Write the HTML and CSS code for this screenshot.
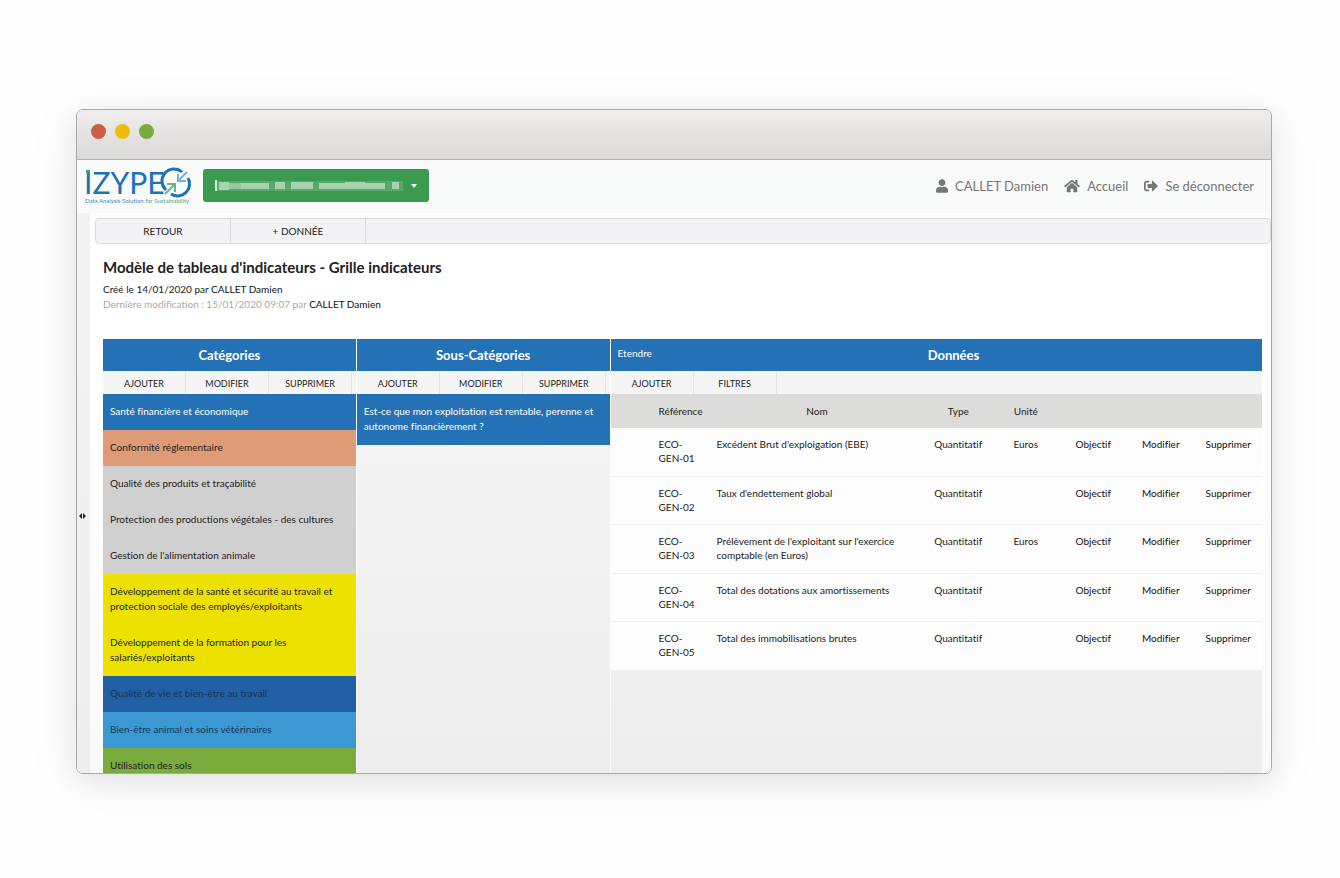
FILE: index.html
```html
<!DOCTYPE html>
<html lang="fr">
<head>
<meta charset="utf-8">
<title>IZYPEO - Grille indicateurs</title>
<link rel="stylesheet" href="styles.css">
</head>
<body>
<div class="stage">
<div class="window">
  <div class="titlebar">
    <span class="dot dot-close"></span>
    <span class="dot dot-min"></span>
    <span class="dot dot-max"></span>
  </div>
  <header class="app-header">
    <a class="logo" href="#" aria-label="IZYPEO">
      <svg width="108" height="38" viewBox="0 0 108 38">
        <text class="logo-word" x="0" y="27">IZYPE</text>
        <rect x="2" y="3" width="4" height="3" fill="#4ea45a"/>
        <g fill="none" stroke-width="3">
          <path d="M82 23A12 12 0 0 1 98 5" stroke="#1b72b8"/>
          <path d="M104 11A12 12 0 0 1 87 27" stroke="#1b72b8"/>
          <path d="M103 5L94 14M94 7V14H102" stroke="#79b2dc" stroke-width="2"/>
          <path d="M81 27L91 17M83 17H91V25" stroke="#6fb38a" stroke-width="2"/>
        </g>
        <text class="logo-tag" x="1" y="36">Data Analysis Solution <tspan class="logo-tag-green">for Sustainability</tspan></text>
      </svg>
    </a>
    <button class="org" aria-label="Exploitation">
      <svg class="org-name" width="192" height="14" viewBox="0 0 192 14">
        <rect x="0" y="1" width="2" height="11" fill="#d5ead9"/>
        <g fill="#d5ead9" opacity=".6">
          <rect x="4" y="3" width="10" height="8"/><rect x="14" y="4" width="12" height="6" opacity=".8"/>
          <rect x="26" y="4" width="28" height="6"/><rect x="60" y="3" width="10" height="7"/>
          <rect x="76" y="3" width="22" height="7"/><rect x="104" y="4" width="26" height="6"/>
          <rect x="130" y="3" width="20" height="7"/><rect x="150" y="4" width="20" height="6"/>
          <rect x="177" y="3" width="7" height="7"/>
        </g>
        <rect x="2" y="2" width="186" height="10" fill="#fff" opacity=".15"/>
      </svg>
      <svg width="6" height="4" viewBox="0 0 6 4"><path d="M0 0H6L3 4Z" fill="#fff"/></svg>
    </button>
    <nav class="nav">
      <a href="#"><svg width="12" height="14" viewBox="0 0 448 512"><path fill="currentColor" d="M224 256c71 0 128-57 128-128S295 0 224 0 96 57 96 128s57 128 128 128zm90 32h-17c-22 10-47 16-73 16s-51-6-73-16h-17C60 288 0 348 0 422v42c0 27 21 48 48 48h352c27 0 48-21 48-48v-42c0-74-60-134-134-134z"/></svg>CALLET Damien</a>
      <a href="#"><svg width="16" height="14" viewBox="0 0 576 512"><path fill="currentColor" d="M281 149L96 301v164c0 8 7 15 16 15h112c9 0 16-7 16-16v-96c0-9 7-16 16-16h64c9 0 16 7 16 16v96c0 9 7 16 16 16h112c9 0 16-7 16-16V300L295 149c-4-4-10-4-14 0zm291 102l-84-69V44c0-7-5-12-12-12h-56c-7 0-12 5-12 12v73l-90-74c-17-14-43-14-60 0L4 251c-5 4-6 12-1 17l25 31c4 5 12 6 17 1L281 107c4-4 10-4 14 0l236 193c5 5 13 4 17-1l25-31c5-5 4-13-1-17z"/></svg>Accueil</a>
      <a href="#"><svg width="14" height="14" viewBox="0 0 512 512"><path fill="currentColor" d="M497 273L329 441c-15 15-41 4-41-17v-96H152c-13 0-24-11-24-24v-96c0-13 11-24 24-24h136V88c0-21 26-32 41-17l168 168c9 9 9 25 0 34zM192 436v-40c0-7-5-12-12-12H96c-18 0-32-14-32-32V160c0-18 14-32 32-32h84c7 0 12-5 12-12V76c0-7-5-12-12-12H96c-53 0-96 43-96 96v192c0 53 43 96 96 96h84c7 0 12-5 12-12z"/></svg>Se déconnecter</a>
    </nav>
  </header>
  <div class="app-body">
    <aside class="rail">
      <button class="rail-handle" aria-label="Menu"><svg width="7" height="6" viewBox="0 0 7 6"><path d="M3 0V6L0 3ZM4 0V6L7 3Z" fill="#222"/></svg></button>
    </aside>
    <main class="main">
      <div class="toolbar">
        <button>RETOUR</button>
        <button>+ DONNÉE</button>
      </div>
      <div class="content">
        <h1>Modèle de tableau d'indicateurs - Grille indicateurs</h1>
        <p class="meta">Créé le 14/01/2020 par <span class="who">CALLET Damien</span></p>
        <p class="meta meta-muted">Dernière modification : 15/01/2020 09:07 par <span class="who">CALLET Damien</span></p>
        <div class="panels">
          <section class="panel">
            <div class="panel-head"><h2>Catégories</h2></div>
            <div class="actions"><button>AJOUTER</button><button>MODIFIER</button><button>SUPPRIMER</button></div>
            <ul class="items">
              <li><button class="item blue">Santé financière et économique</button></li>
              <li><button class="item orange">Conformité réglementaire</button></li>
              <li><button class="item grey">Qualité des produits et traçabilité</button></li>
              <li><button class="item grey">Protection des productions végétales - des cultures</button></li>
              <li><button class="item grey">Gestion de l'alimentation animale</button></li>
              <li><button class="item yellow">Développement de la santé et sécurité au travail et protection sociale des employés/exploitants</button></li>
              <li><button class="item yellow">Développement de la formation pour les salariés/exploitants</button></li>
              <li><button class="item navy">Qualité de vie et bien-être au travail</button></li>
              <li><button class="item sky">Bien-être animal et soins vétérinaires</button></li>
              <li><button class="item green">Utilisation des sols</button></li>
            </ul>
          </section>
          <section class="panel">
            <div class="panel-head"><h2>Sous-Catégories</h2></div>
            <div class="actions"><button>AJOUTER</button><button>MODIFIER</button><button>SUPPRIMER</button></div>
            <ul class="items">
              <li><button class="item blue">Est-ce que mon exploitation est rentable, perenne et autonome financièrement ?</button></li>
            </ul>
          </section>
          <section class="panel">
            <div class="panel-head"><a class="extend" href="#">Etendre</a><h2>Données</h2></div>
            <div class="actions"><button>AJOUTER</button><button>FILTRES</button></div>
            <table class="data">
              <colgroup><col class="c-pad"><col class="c-ref"><col class="c-name"><col><col><col><col><col></colgroup>
              <thead><tr><th></th><th>Référence</th><th>Nom</th><th>Type</th><th>Unité</th><th></th><th></th><th></th></tr></thead>
              <tbody>
                <tr><td></td><td class="left">ECO-GEN-01</td><td class="left">Excédent Brut d'exploigation (EBE)</td><td>Quantitatif</td><td>Euros</td><td><button>Objectif</button></td><td><button>Modifier</button></td><td><button>Supprimer</button></td></tr>
                <tr><td></td><td class="left">ECO-GEN-02</td><td class="left">Taux d'endettement global</td><td>Quantitatif</td><td></td><td><button>Objectif</button></td><td><button>Modifier</button></td><td><button>Supprimer</button></td></tr>
                <tr><td></td><td class="left">ECO-GEN-03</td><td class="left">Prélèvement de l'exploitant sur l'exercice comptable (en Euros)</td><td>Quantitatif</td><td>Euros</td><td><button>Objectif</button></td><td><button>Modifier</button></td><td><button>Supprimer</button></td></tr>
                <tr><td></td><td class="left">ECO-GEN-04</td><td class="left">Total des dotations aux amortissements</td><td>Quantitatif</td><td></td><td><button>Objectif</button></td><td><button>Modifier</button></td><td><button>Supprimer</button></td></tr>
                <tr><td></td><td class="left">ECO-GEN-05</td><td class="left">Total des immobilisations brutes</td><td>Quantitatif</td><td></td><td><button>Objectif</button></td><td><button>Modifier</button></td><td><button>Supprimer</button></td></tr>
              </tbody>
            </table>
          </section>
        </div>
      </div>
    </main>
  </div>
</div>
</div>
</body>
</html>
```
FILE: styles.css
```css
* { box-sizing: border-box; }
body { margin: 0; background: #fefefe; font-family: Lato, sans-serif; font-size: 10px; font-variant-ligatures: none; color: #222; }
button { font: inherit; font-variant-ligatures: inherit; color: inherit; background: none; border: 0; padding: 0; margin: 0; }
a { color: inherit; text-decoration: none; }
h1, h2, p, ul { margin: 0; padding: 0; list-style: none; }

.stage { height: 100vh; padding: 109px 68px 104px 76px; display: flex; }
.window {
  flex: 1; display: flex; flex-direction: column; overflow: hidden;
  border: 1px solid #aaa9a7; border-radius: 7px; background: #fff;
  box-shadow: 0 6px 24px rgba(0,0,0,.08), 0 10px 60px rgba(0,0,0,.06);
}
.titlebar {
  flex: none; height: 50px; padding: 0 14px 6px; display: flex; align-items: center; gap: 9px;
  background: linear-gradient(#efeeec, #dad9d7); border-bottom: 1px solid #b6b3ae;
}
.dot { width: 15px; height: 15px; border-radius: 50%; }
.dot-close { background: #cd5c45; }
.dot-min { background: #ecbd0c; }
.dot-max { background: #78ab3e; }

.app-header { flex: none; height: 53px; padding: 0 17px 2px 7px; display: flex; align-items: center; background: #f9fafa; }
.logo { display: flex; width: 119px; }
.logo-word { font-size: 30px; fill: #1b72b8; }
.logo-tag { font-size: 6px; fill: #3f8cc4; }
.logo-tag-green { fill: #5aa678; }
.org {
  width: 226px; height: 33px; padding: 0 12px; border-radius: 3px; background: #3a9a50;
  display: flex; align-items: center; justify-content: space-between;
}
.nav { margin-left: auto; display: flex; gap: 16px; font-size: 13px; color: #777; }
.nav a { display: flex; align-items: center; gap: 7px; }

.app-body { flex: 1; min-height: 0; display: flex; background: linear-gradient(#fff 40%, #f9f9f9); }
.rail { flex: none; width: 13px; padding: 46px 2px 0 0; display: flex; align-items: center; justify-content: center; background: linear-gradient(#f3f3f6, #ededed); }
.rail-handle { display: flex; }
.main { flex: 1; min-width: 0; padding-top: 5px; display: flex; flex-direction: column; }
.toolbar { flex: none; height: 26px; margin: 0 0 0 5px; display: flex; background: #f3f3f5; border: 1px solid #dbdbdb; border-radius: 4px; }
.toolbar button { width: 135px; border-right: 1px solid #d8d8d8; }
.content { flex: 1; min-height: 0; padding: 13px 9px 0 13px; display: flex; flex-direction: column; }
h1 { font-size: 15px; line-height: 20px; font-weight: 700; margin-bottom: 5px; }
.meta { line-height: 15px; }
.meta-muted { color: #aaa; }
.who { color: #111; }

.panels { flex: 1; min-height: 0; margin-top: 27px; display: grid; grid-template-columns: 253fr 253fr 652fr; gap: 1px; }
.panel { min-width: 0; overflow: hidden; background: linear-gradient(#f6f6f6, #ededed); }
.panel-head { height: 32px; padding: 0 7px; display: flex; align-items: center; background: #2471b6; color: #fff; }
h2 { flex: 1; font-size: 13px; line-height: 16px; font-weight: 700; text-align: center; }
.extend { padding-bottom: 4px; }
.actions { height: 23px; display: flex; background: #f5f5f5; font-size: 9px; }
.actions button { width: 83px; padding-top: 2px; border-right: 1px solid #e6e6e6; }
.item { display: block; width: 100%; padding: 10px 7px 11px; line-height: 15px; text-align: left; }
.blue { background: #2471b6; color: #fff; }
.orange { background: #df9b75; }
.grey { background: #d0d0d0; }
.yellow { background: #ece100; }
.navy { background: #225fa5; color: #173458; }
.sky { background: #3b98d3; color: #14395a; }
.green { background: #79ab3d; }

.data { width: 100%; table-layout: fixed; border-collapse: separate; border-spacing: 0; line-height: 14px; }
.c-pad { width: 41px; }
.c-ref { width: 58px; }
.c-name { width: 33%; }
.data th { height: 34px; padding: 0; font-weight: 400; background: #dcdcdb; }
.data td { height: 48px; padding: 9px 0; vertical-align: top; text-align: center; background: #fdfdfd; border-bottom: 1px solid #f1f1f1; }
.data tr:nth-child(odd) td { height: 49px; }
.data .left { padding: 9px 7px; text-align: left; }
.data button { color: #111; }
```
